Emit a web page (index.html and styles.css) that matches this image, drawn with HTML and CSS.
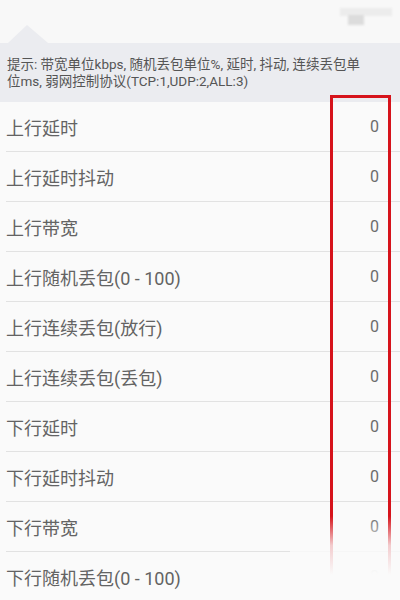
FILE: index.html
```html
<!DOCTYPE html>
<html lang="zh">
<head>
<meta charset="utf-8">
<link rel="stylesheet" href="styles.css">
</head>
<body>
<div class="page">
  <div class="topbar">
    <div class="pointer"></div>
    <div class="blurmark"><span class="bm-light"></span><span class="bm-dark"></span></div>
  </div>
  <div class="hint">提示: 带宽单位kbps, 随机丢包单位%, 延时, 抖动, 连续丢包单位ms, 弱网控制协议(TCP:1,UDP:2,ALL:3)</div>
  <div class="list">
    <div class="row"><span class="label">上行延时</span><span class="value">0</span></div>
    <div class="row"><span class="label">上行延时抖动</span><span class="value">0</span></div>
    <div class="row"><span class="label">上行带宽</span><span class="value">0</span></div>
    <div class="row"><span class="label">上行随机丢包(0 - 100)</span><span class="value">0</span></div>
    <div class="row"><span class="label">上行连续丢包(放行)</span><span class="value">0</span></div>
    <div class="row"><span class="label">上行连续丢包(丢包)</span><span class="value">0</span></div>
    <div class="row"><span class="label">下行延时</span><span class="value">0</span></div>
    <div class="row"><span class="label">下行延时抖动</span><span class="value">0</span></div>
    <div class="row"><span class="label">下行带宽</span><span class="value">0</span></div>
    <div class="row"><span class="label">下行随机丢包(0 - 100)</span><span class="value">0</span></div>
  </div>
  <div class="redbox"></div>
  <div class="fade"></div>
</div>
</body>
</html>
```
FILE: styles.css
```css
* { box-sizing: border-box; }
html, body {
  margin: 0;
  padding: 0;
  width: 400px;
  height: 600px;
  overflow: hidden;
  background: #fafafa;
}
.page {
  position: relative;
  width: 400px;
  height: 600px;
  overflow: hidden;
  font-family: Roboto, "Noto Sans CJK SC", sans-serif;
}
.topbar {
  height: 43px;
  background: #f8f8f8;
  display: flex;
  justify-content: space-between;
  align-items: flex-start;
  padding: 0 8px 0 8px;
}
.pointer {
  align-self: flex-end;
  width: 0;
  height: 0;
  border-left: 19px solid transparent;
  border-right: 21px solid transparent;
  border-bottom: 18px solid #ebecf0;
}
.blurmark {
  margin-top: 8px;
  width: 52px;
  height: 18px;
  position: relative;
  filter: blur(1px);
}
.bm-light {
  position: absolute;
  left: 0;
  top: 0;
  width: 52px;
  height: 8px;
  background: #ececec;
}
.bm-dark {
  position: absolute;
  left: 8px;
  top: 7px;
  width: 16px;
  height: 10px;
  background: #dcdcdc;
}
.hint {
  height: 59px;
  background: #ebecf0;
  color: #555555;
  font-size: 13.5px;
  line-height: 17px;
  padding: 13px 27px 0 7px;
}
.list {
  display: flex;
  flex-direction: column;
}
.row {
  height: 50px;
  margin-left: 6px;
  border-bottom: 1px solid #e2e2e2;
  display: flex;
  align-items: center;
  justify-content: space-between;
  padding-right: 21px;
}
.label {
  font-size: 18px;
  color: #636363;
}
.value {
  font-size: 16px;
  color: #6c6c6c;
}
.redbox {
  position: absolute;
  left: 330px;
  top: 95px;
  width: 61px;
  height: 540px;
  border: 3.5px solid #d6131b;
  border-bottom: none;
}
.fade {
  position: absolute;
  left: 290px;
  top: 516px;
  width: 110px;
  height: 84px;
  background: linear-gradient(to bottom, rgba(250,250,250,0) 0%, rgba(250,250,250,0.8) 35%, #fafafa 70%);
}
```
